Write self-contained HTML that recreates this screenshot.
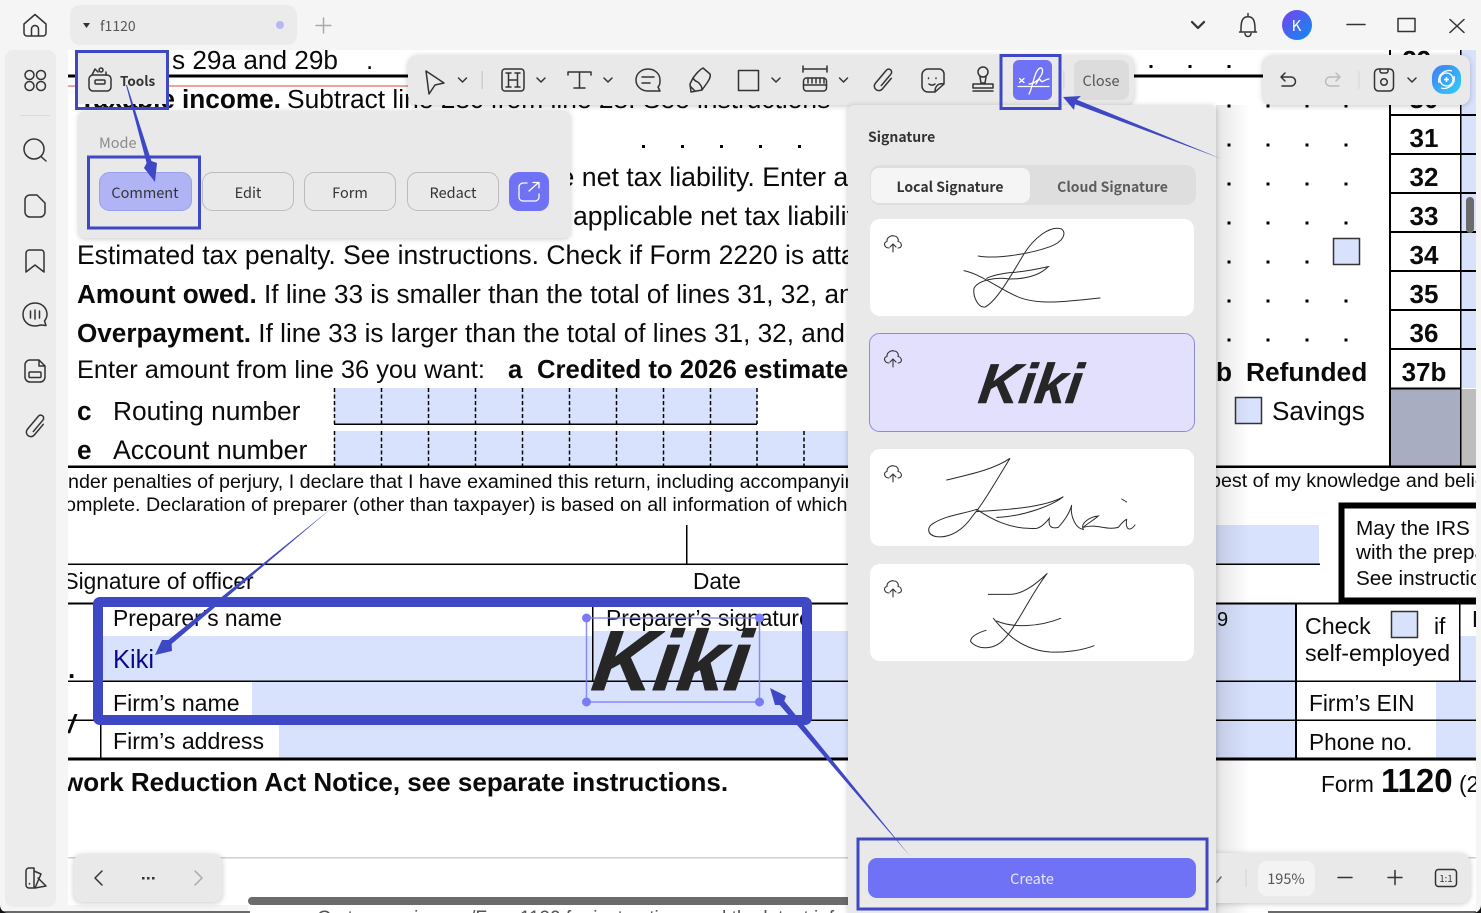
<!DOCTYPE html>
<html><head><meta charset="utf-8">
<style>
html,body{margin:0;padding:0;background:#f5f5f5;width:1481px;height:913px;overflow:hidden}
svg{display:block;position:absolute;left:0;top:0}
.d{font-family:"Liberation Sans",sans-serif;fill:#0a0a0a}
.b{font-weight:700}
.u{font-family:"Noto Sans CJK SC","Liberation Sans",sans-serif;fill:#333}
.i{fill:none;stroke:#333;stroke-width:1.5;stroke-linecap:round;stroke-linejoin:round}
.g{stroke:#aaa}
.k{font-family:"Liberation Sans",sans-serif;font-style:italic;font-weight:700;fill:#262626;stroke:#262626;stroke-linejoin:round}
.sig{fill:none;stroke:#2a2a2a;stroke-width:1;stroke-linecap:round}
.sh{filter:drop-shadow(0 1px 3px rgba(0,0,0,.22))}
.a{fill:#3f48c4}
</style></head><body>
<svg width="1481" height="913" viewBox="0 0 1481 913" xmlns="http://www.w3.org/2000/svg">
<defs>
<clipPath id="doc"><rect x="68" y="50" width="1408" height="863"/></clipPath>
<clipPath id="boxr"><rect x="1346" y="508" width="130" height="90"/></clipPath>
<linearGradient id="av" x1="0" y1="0" x2="1" y2="1"><stop offset="0" stop-color="#7a3ff0"/><stop offset="1" stop-color="#0a90ee"/></linearGradient>
<linearGradient id="ai" x1="0" y1="0" x2="1" y2="1"><stop offset="0" stop-color="#3d7df5"/><stop offset="1" stop-color="#35d0f5"/></linearGradient>
<linearGradient id="fade" x1="0" y1="0" x2="1" y2="0"><stop offset="0" stop-color="#000" stop-opacity=".1"/><stop offset="1" stop-color="#000" stop-opacity="0"/></linearGradient>
<g id="cloud" class="i" style="stroke-width:1.1"><path d="M-4 4C-9 4-10-2-6-2.500C-6.500-7-1-9 1-8C4-8 6-5 5-2.500C9-2 10 4 5 4"/><path d="M0 8V0M-3 3L0 0L3 3"/></g>
<path id="chev" class="i" d="M-4-2L0 2L4-2"/>
<path id="clip" d="M1.500 6V-9A3 3 0 0 0-4.500-9V8A4.500 4.500 0 0 0 4.500 8V-6"/>
</defs>

<!-- document -->
<g clip-path="url(#doc)">
<rect x="68" y="50" width="1408" height="863" fill="#fff"/>
<!-- blue fields -->
<g fill="#d9e2fd">
<rect x="1461" y="50" width="15" height="338"/>
<rect x="334" y="388" width="423" height="36"/>
<rect x="334" y="431" width="530" height="35"/>
<rect x="1180" y="525" width="139" height="39"/>
<rect x="103" y="636" width="489" height="45"/>
<rect x="592" y="631" width="300" height="50"/>
<rect x="103" y="682" width="780" height="38"/>
<rect x="100" y="721" width="780" height="37"/>
<rect x="1180" y="604" width="115" height="154"/>
<rect x="1460" y="636" width="16" height="45"/>
<rect x="1436" y="682" width="40" height="38"/>
<rect x="1436" y="721" width="40" height="37"/>
</g>
<rect x="103" y="682" width="149" height="38" fill="#fff"/>
<rect x="101" y="721" width="178" height="37" fill="#fff"/>
<rect x="1390" y="389" width="70" height="77" fill="#a8adc2"/>
<rect x="1461" y="389" width="15" height="77" fill="#bdbdbd"/>

<!-- rules -->
<g fill="#000">
<rect x="68" y="74.500" width="1396" height="3"/>
<rect x="68" y="465.500" width="1408" height="2.500"/>
<rect x="68" y="563.500" width="1252" height="1.500"/>
<rect x="68" y="602.500" width="1408" height="2"/>
<rect x="68" y="680.500" width="1408" height="1.500"/>
<rect x="68" y="719.500" width="1408" height="1.500"/>
<rect x="68" y="757.500" width="1408" height="3"/>
<rect x="686" y="525" width="1.500" height="39"/>
<rect x="592" y="604" width="1.500" height="77"/>
<rect x="100" y="604" width="1.500" height="154"/>
<rect x="1295" y="604" width="2" height="154"/>
<rect x="1459" y="604" width="1.500" height="77"/>
<rect x="1389" y="50" width="2" height="416"/>
<rect x="1460" y="50" width="1.500" height="416"/>
<rect x="334" y="423.500" width="423" height="1.500"/>
</g>
<rect x="68" y="85.500" width="345" height="1" fill="#e0453f"/>
<g fill="#000">
<rect x="1390" y="114" width="70" height="2"/><rect x="1390" y="153" width="70" height="2"/><rect x="1390" y="192" width="70" height="2"/><rect x="1390" y="231" width="70" height="2"/><rect x="1390" y="270" width="70" height="2"/><rect x="1390" y="309" width="70" height="2"/><rect x="1390" y="348" width="70" height="2"/><rect x="1390" y="387.500" width="70" height="2"/>
<rect x="1461" y="114" width="15" height="2"/><rect x="1461" y="153" width="15" height="2"/><rect x="1461" y="192" width="15" height="2"/><rect x="1461" y="231" width="15" height="2"/><rect x="1461" y="270" width="15" height="2"/><rect x="1461" y="309" width="15" height="2"/><rect x="1461" y="348" width="15" height="2"/>
</g>
<g stroke="#000" stroke-width="1.500" stroke-dasharray="4 2.500">
<path d="M334.500 388V424M381.500 388V424M428.500 388V424M475.500 388V424M522.500 388V424M569.500 388V424M616.500 388V424M663.500 388V424M710.500 388V424M757 388V424"/>
<path d="M334.500 431V466M381.500 431V466M428.500 431V466M475.500 431V466M522.500 431V466M569.500 431V466M616.500 431V466M663.500 431V466M710.500 431V466M757 431V466M804 431V466"/>
</g>

<!-- dots -->
<g fill="#000">
<rect x="1149.500" y="65" width="3" height="3"/><rect x="1188.500" y="65" width="3" height="3"/><rect x="1227.500" y="65" width="3" height="3"/>
<rect x="1227.500" y="104.500" width="3" height="3"/><rect x="1266.500" y="104.500" width="3" height="3"/><rect x="1305.500" y="104.500" width="3" height="3"/><rect x="1344.500" y="104.500" width="3" height="3"/>
<rect x="1227.500" y="143.500" width="3" height="3"/><rect x="1266.500" y="143.500" width="3" height="3"/><rect x="1305.500" y="143.500" width="3" height="3"/><rect x="1344.500" y="143.500" width="3" height="3"/>
<rect x="1227.500" y="182.500" width="3" height="3"/><rect x="1266.500" y="182.500" width="3" height="3"/><rect x="1305.500" y="182.500" width="3" height="3"/><rect x="1344.500" y="182.500" width="3" height="3"/>
<rect x="1227.500" y="221.500" width="3" height="3"/><rect x="1266.500" y="221.500" width="3" height="3"/><rect x="1305.500" y="221.500" width="3" height="3"/><rect x="1344.500" y="221.500" width="3" height="3"/>
<rect x="1227.500" y="260.500" width="3" height="3"/><rect x="1266.500" y="260.500" width="3" height="3"/><rect x="1305.500" y="260.500" width="3" height="3"/>
<rect x="1227.500" y="299.500" width="3" height="3"/><rect x="1266.500" y="299.500" width="3" height="3"/><rect x="1305.500" y="299.500" width="3" height="3"/><rect x="1344.500" y="299.500" width="3" height="3"/>
<rect x="1227.500" y="338.500" width="3" height="3"/><rect x="1266.500" y="338.500" width="3" height="3"/><rect x="1305.500" y="338.500" width="3" height="3"/><rect x="1344.500" y="338.500" width="3" height="3"/>
<rect x="642" y="145" width="3" height="3"/><rect x="681" y="145" width="3" height="3"/><rect x="720" y="145" width="3" height="3"/><rect x="759" y="145" width="3" height="3"/><rect x="798" y="145" width="3" height="3"/>
</g>

<!-- checkboxes -->
<g fill="#d9e2fd" stroke="#333" stroke-width="1.500">
<rect x="1333.500" y="238.500" width="26" height="26"/>
<rect x="1235.500" y="397.500" width="26" height="26"/>
<rect x="1391.500" y="611.500" width="26" height="26"/>
</g>

<!-- text -->
<g class="d" font-size="26.200">
<text x="172" y="69">s 29a and 29b</text>
<text x="366" y="69">.</text>
<text x="175" y="108" class="b" text-anchor="end">Taxable</text>
<text x="182" y="108" class="b">income.</text>
<text x="287" y="108" font-size="26.350">Subtract line 28c from line 28. See instructions</text>
<text x="559.500" y="186" font-size="26.700">e net tax liability. Enter a</text>
<text x="573" y="225" font-size="26.600">applicable net tax liability</text>
<text x="77" y="264" font-size="26.500">Estimated tax penalty. See instructions. Check if Form 2220 is attac</text>
<text x="77" y="303"><tspan class="b" font-size="26.100">Amount owed.</tspan> If line 33 is smaller than the total of lines 31, 32, an</text>
<text x="77" y="342"><tspan class="b" font-size="26.100">Overpayment.</tspan> If line 33 is larger than the total of lines 31, 32, and</text>
<text x="77" y="378" font-size="25.400">Enter amount from line 36 you want:</text>
<text x="508" y="378" class="b" font-size="25.700">a</text>
<text x="537" y="378" class="b" font-size="25.700">Credited to 2026 estimated</text>
<text x="77" y="420" class="b">c</text>
<text x="113" y="420" font-size="26.350">Routing number</text>
<text x="77" y="459" class="b">e</text>
<text x="113" y="459" font-size="26.700">Account number</text>
<text x="1216" y="381" class="b">b</text>
<text x="1246" y="381" class="b" font-size="26.300">Refunded</text>
<text x="1272" y="420" font-size="26.100">Savings</text>
</g>
<g class="d b" font-size="26" text-anchor="middle">
<text x="1424" y="69">29c</text><text x="1424" y="108">30</text>
<text x="1424" y="147">31</text><text x="1424" y="186">32</text><text x="1424" y="225">33</text><text x="1424" y="264">34</text><text x="1424" y="303">35</text><text x="1424" y="342">36</text><text x="1424" y="381">37b</text>
</g>
<g class="d" font-size="19.700">
<text x="68" y="488">nder penalties of perjury, I declare that I have examined this return, including accompanying</text>
<text x="65" y="511">omplete. Declaration of preparer (other than taxpayer) is based on all information of which</text>
<text x="1210" y="487">best of my knowledge and belief</text>
</g>
<g class="d" font-size="22.700">
<text x="63.500" y="589">Signature of officer</text>
<text x="693" y="589">Date</text>
<text x="113" y="626" font-size="22.800">Preparer’s name</text>
<text x="606" y="626" font-size="22.800">Preparer’s signature</text>
<text x="113" y="711" font-size="23.100">Firm’s name</text>
<text x="113" y="749" font-size="23.100">Firm’s address</text>
<text x="1217" y="626" font-size="20">9</text>
<text x="1305" y="634" font-size="23.200">Check</text>
<text x="1434" y="634">if</text>
<text x="1305" y="661" font-size="23.300">self-employed</text>
<text x="1309" y="711">Firm’s EIN</text>
<text x="1309" y="750">Phone no.</text>
<text x="1321" y="792">Form</text>
<text x="1459" y="792">(2</text>
<text x="1472" y="627">P</text>
</g>
<text class="d" x="113" y="668" font-size="25.500" style="fill:#0a0a8c">Kiki</text>
<text class="d b" x="63" y="791" font-size="26">work Reduction Act Notice, see separate instructions.</text>
<text class="d b" x="1381" y="792" font-size="33">1120</text>
<text class="d" x="68" y="678" font-size="26" font-weight="700">.</text>
<text class="d b" x="68" y="733" font-size="26" font-style="italic">/</text>

<!-- IRS box -->
<rect x="1341.500" y="505.500" width="160" height="95" fill="none" stroke="#000" stroke-width="6"/>
<g class="d" font-size="20.700" clip-path="url(#boxr)">
<text x="1356" y="535">May the IRS</text>
<text x="1356" y="559">with the preparer</text>
<text x="1356" y="585">See instructions</text>
</g>

<!-- page bottom -->
<rect x="68" y="857" width="1408" height="1.500" fill="#cfcfcf"/>
<text class="d" x="317" y="924" font-size="19" style="fill:#555">Go to www.irs.gov/Form1120 for instructions and the latest information.</text>
<rect x="1216" y="105" width="34" height="808" fill="url(#fade)"/>
<rect x="248" y="897" width="610" height="8" rx="4" fill="#6b6b6b"/>
<rect x="1466" y="197" width="8" height="36" rx="4" fill="#6b6b6b"/>
</g>

<!-- big Kiki + selection -->
<text class="k" font-size="85" stroke-width="1" transform="translate(590 690) skewX(-8)">Kiki</text>
<g fill="#7b7bf5" stroke="#7b7bf5">
<path d="M586.500 618H759.500M586.500 702H759.500M586.500 618V702M759.500 618V702" fill="none" stroke-width="1.500" opacity=".85"/>
<circle cx="586.500" cy="618" r="4"/><circle cx="759.500" cy="618" r="4"/><circle cx="586.500" cy="702" r="4"/><circle cx="759.500" cy="702" r="4"/>
</g>

<!-- title bar -->
<rect x="0" y="0" width="1481" height="50" fill="#f5f5f5"/>
<rect x="1476" y="50" width="5" height="863" fill="#f5f5f5"/>
<rect x="0" y="50" width="68" height="863" fill="#f5f5f5"/>
<rect x="0" y="905" width="248" height="8" fill="#f5f5f5"/>
<rect x="0" y="911" width="250" height="2" fill="#6a6a6a"/>
<rect x="1268" y="911" width="208" height="2" fill="#6a6a6a"/>
<path d="M0 905V913H8A8 8 0 0 1 0 905Z" fill="#111"/>
<path d="M1481 905V913H1473A8 8 0 0 0 1481 905Z" fill="#111"/>
<rect x="70" y="5" width="227" height="40" rx="10" fill="#ebebeb"/>
<path d="M83 23H90L86.500 28Z" fill="#333"/>
<text class="u" x="100" y="31" font-size="14" style="fill:#555">f1120</text>
<circle cx="280" cy="25" r="4" fill="#b9b6f5"/>
<path class="i g" d="M323.500 18V33M316 25.500H331"/>
<path class="i" d="M24 24L35 14.500L46 24V33A3 3 0 0 1 43 36H27A3 3 0 0 1 24 33ZM31.500 36V29A3.500 3.500 0 0 1 38.500 29V36"/>
<use href="#chev" transform="translate(1198 25) scale(1.500)"/>
<path class="i" d="M1248 13.500V16M1241 32C1241 29 1240.500 22 1243 19C1245 16 1251 16 1253 19C1255.500 22 1255 29 1255 32H1241ZM1239.500 32H1256.500M1245 33.500A3 3 0 0 0 1251 33.500"/>
<circle cx="1297" cy="25" r="15" fill="url(#av)"/>
<text x="1296.500" y="31" font-family="Noto Sans CJK SC,Liberation Sans,sans-serif" font-size="15" text-anchor="middle" fill="#fff">K</text>
<path class="i" d="M1347 24.500H1365M1398 18.500H1415V31.500H1398ZM1450 19.500L1464 32.500M1464 19.500L1450 32.500"/>

<!-- left sidebar -->
<rect x="5" y="50" width="51" height="857" rx="8" fill="#ececec"/>
<g class="i">
<circle cx="29.500" cy="75" r="4.500"/><circle cx="41" cy="75" r="4.500"/><circle cx="29.500" cy="86" r="4.500"/><circle cx="41" cy="86" r="4.500"/>
<circle cx="34" cy="149" r="10"/><path d="M41.500 157L46 161"/>
<path d="M30 195H37L45 203V212A5 5 0 0 1 40 217H30A5 5 0 0 1 25 212V200A5 5 0 0 1 30 195Z"/>
<path d="M29.500 250H41A3 3 0 0 1 44 253V272L35 265L26 272V253A3.500 3.500 0 0 1 29.500 250Z"/>
<path d="M35 303C28 303 23 308 23 314.500C23 321 28 326 35 326C37 326 39 325.500 40.500 325L46 325.500L44.500 321C46 319 47 317 47 314.500C47 308 42 303 35 303ZM30.500 311V318M35 310V319M39.500 311V318"/>
<path d="M30 360H39L45 366V377A5 5 0 0 1 40 382H30A5 5 0 0 1 25 377V365A5 5 0 0 1 30 360ZM39 360V366H45"/>
<rect x="29" y="372" width="12" height="5.500" rx="1"/>
<use href="#clip" transform="translate(36 426) rotate(40)"/>
<path d="M29 868H34V888H29A3 3 0 0 1 26 885V871A3 3 0 0 1 29 868ZM34 871L41 874L35 888M38 878L46 886L35 888"/>
<path d="M29.500 883.500V884"/>
</g>
<rect x="20" y="115" width="30" height="1" fill="#dadada"/>

<!-- tools button -->
<rect x="76" y="52" width="91" height="52" fill="#e9e9e9"/>
<g class="i"><rect x="89" y="75" width="22" height="16" rx="4"/><rect x="95" y="80" width="10" height="4" rx="1"/><path d="M92 75L95 69L98 72M101 68A2 2 0 1 0 101.100 68M106 75V72"/></g>
<text class="u" x="120" y="86" font-size="13.500" font-weight="700">Tools</text>

<!-- mode panel -->
<rect class="sh" x="79" y="111" width="491" height="127" rx="6" fill="#e9e9e9"/>
<text class="u" x="99" y="148" font-size="14.500" style="fill:#8a8a8a">Mode</text>
<rect x="99.500" y="172.500" width="92" height="38" rx="10" fill="#b0b4f5" stroke="#9a9eee"/>
<rect x="202.500" y="172.500" width="91" height="38" rx="10" fill="#e9e9e9" stroke="#bcbcbc"/>
<rect x="304.500" y="172.500" width="91" height="38" rx="10" fill="#e9e9e9" stroke="#bcbcbc"/>
<rect x="407.500" y="172.500" width="91" height="38" rx="10" fill="#e9e9e9" stroke="#bcbcbc"/>
<rect x="509" y="172" width="40" height="39" rx="10" fill="#6f72f5"/>
<path d="M527 183H523A4 4 0 0 0 519 187V197A4 4 0 0 0 523 201H535A4 4 0 0 0 539 197V194M529 191L538 183M533 182.500H539V188" fill="none" stroke="#fff" stroke-width="1.300" stroke-linecap="round" stroke-linejoin="round"/>
<g class="u" font-size="14.500" text-anchor="middle">
<text x="145" y="198">Comment</text><text x="248" y="198">Edit</text><text x="350" y="198">Form</text><text x="453" y="198">Redact</text>
</g>

<!-- main toolbar -->
<rect class="sh" x="408" y="55" width="726" height="50" rx="10" fill="#e9e9e9"/>
<g class="i">
<path d="M426 71L444 83L435 85L429 94Z"/>
<use href="#chev" transform="translate(462.500 80)"/>
<rect x="502" y="69" width="22" height="22" rx="3"/>
<path d="M506 73H511M506 87H511M515 73H520M515 87H520M508.500 73V87M517.500 73V87M508.500 80H517.500"/>
<use href="#chev" transform="translate(541 80)"/>
<path d="M568 75V72H591V75M579.500 72V88M574 88H585" />
<use href="#chev" transform="translate(608 80)"/>
<path d="M648 69C641 69 636 74 636 80C636 86 641 91 648 91H660L658 87C660 85 660 83 660 80C660 74 655 69 648 69ZM642 77H654M642 83H650"/>
<path d="M703 68L710 74C711 77 709 80 707 83L702 90L691 92L690 84L693 78C696 74 699 70 703 68ZM693 78C695 82 697 81 699 83C700 85 702 85 702 90M690 86L695 91"/>
<rect x="738.500" y="70.500" width="20" height="20"/>
<use href="#chev" transform="translate(776 80)"/>
<path d="M803 66V72M827 66V72M803 69H827"/>
<rect x="803.500" y="78" width="23" height="13" rx="3"/>
<path d="M803.500 85H826.500M808 79V83M812 79V83M816 79V83M820 79V83M824 79V83"/>
<use href="#chev" transform="translate(843.500 80)"/>
<use href="#clip" transform="translate(884 80) rotate(40)"/>
<path d="M928 69H939A5 5 0 0 1 944 74V84L935 92H928A6 6 0 0 1 922 86V75A6 6 0 0 1 928 69ZM944 84C938 83 935 86 935 92M928.500 78V78.500M936 78V78.500M929 84C931 85.500 933 85.500 935 84"/>
<circle cx="983" cy="72" r="5"/>
<path d="M980 77L981 83H985L986 77M973 84H993V88H973ZM973 91H993"/>
</g>
<rect x="481.500" y="71" width="1.500" height="18" fill="#cfcfcf"/>
<rect x="1013" y="60" width="39" height="40" rx="6" fill="#6f72f5"/>
<g fill="none" stroke="#fff" stroke-width="1.300" stroke-linecap="round">
<path d="M1018 86.500H1049M1019.500 78.500L1024 82.500M1024 78.500L1019.500 82.500"/>
<path d="M1029 94C1033 87 1034 71 1040 68C1046 67 1041 83 1029 84M1036 84C1038 80 1040 78 1041 81C1043 83 1045 79 1049 79"/>
</g>
<rect x="1063" y="71" width="1.500" height="18" fill="#d8d8d8"/>
<rect x="1074" y="60" width="55" height="40" rx="8" fill="#dcdcdc"/>
<text class="u" x="1101" y="86" font-size="14.500" text-anchor="middle" style="fill:#555">Close</text>

<!-- undo toolbar -->
<rect class="sh" x="1263" y="55" width="207" height="50" rx="10" fill="#e9e9e9"/>
<g class="i">
<path d="M1285 73L1281 77L1285 81M1281 77H1291A4.500 4.500 0 0 1 1291 86H1282"/>
<path class="g" style="stroke:#bbb" d="M1336 73L1340 77L1336 81M1340 77H1330A4.500 4.500 0 0 0 1330 86H1339"/>
<rect x="1374.500" y="69" width="19" height="22" rx="4"/>
<path d="M1380 69V71A2 2 0 0 0 1382 73H1386A2 2 0 0 0 1388 71V69"/>
<circle cx="1384" cy="82" r="3.300"/>
<use href="#chev" transform="translate(1412 80)"/>
</g>
<rect x="1358.500" y="71" width="1" height="18" fill="#d8d8d8"/>
<rect x="1432" y="65" width="29" height="29" rx="12" fill="url(#ai)"/>
<g fill="none" stroke="#fff" stroke-width="1.300">
<circle cx="1446.500" cy="79.500" r="6.500"/><path d="M1439 83C1437 73 1447 69 1452 71M1454 76C1456 86 1446 90 1441 88"/>
<path d="M1446.500 77V82M1444 79.500H1449" stroke-width="1.500"/>
</g>

<!-- bottom nav -->
<rect class="sh" x="74" y="854" width="148" height="48" rx="8" fill="#e9e9e9"/>
<path class="i" d="M102 871L95 878L102 885"/>
<path class="i" d="M195 871L202 878L195 885" style="stroke:#aaa"/>
<g fill="#333"><rect x="142" y="877" width="2.500" height="2.500"/><rect x="147" y="877" width="2.500" height="2.500"/><rect x="152" y="877" width="2.500" height="2.500"/></g>

<!-- zoom bar -->
<rect class="sh" x="1190" y="853" width="280" height="50" rx="10" fill="#e9e9e9"/>
<path class="i" d="M1217 882L1221 877" style="stroke:#666"/>
<rect x="1245.500" y="869" width="1" height="18" fill="#d4d4d4"/>
<rect x="1258" y="861" width="57" height="35" rx="9" fill="#f3f3f3"/>
<text class="u" x="1286" y="884" font-size="14.500" text-anchor="middle" style="fill:#555">195%</text>
<path class="i" d="M1338 877.500H1352M1388 877.500H1402M1395 870.500V884.500"/>
<rect class="i" x="1435.500" y="869.500" width="21" height="17" rx="3"/>
<text class="u" x="1446" y="882" font-size="9.500" text-anchor="middle">1:1</text>

<!-- signature panel -->
<path class="sh" d="M854 105H1210A6 6 0 0 1 1216 111V913H848V111A6 6 0 0 1 854 105Z" fill="#e9e9e9"/>
<text class="u" x="868" y="142" font-size="14" font-weight="700">Signature</text>
<rect x="870" y="165" width="326" height="40" rx="10" fill="#dedede"/>
<rect x="871" y="168" width="159" height="35" rx="8" fill="#f5f5f5"/>
<text class="u" x="950" y="192" font-size="14" font-weight="700" text-anchor="middle">Local Signature</text>
<text class="u" x="1112.500" y="192" font-size="14" font-weight="700" text-anchor="middle" style="fill:#5c5c5c">Cloud Signature</text>
<rect x="870" y="219" width="324" height="97" rx="10" fill="#fff"/>
<rect x="869.500" y="333.500" width="325" height="98" rx="10" fill="#e2e0fc" stroke="#8a8be0"/>
<rect x="870" y="449" width="324" height="97" rx="10" fill="#fff"/>
<rect x="870" y="564" width="324" height="97" rx="10" fill="#fff"/>
<use href="#cloud" transform="translate(893 244)"/>
<use href="#cloud" transform="translate(893 359)"/>
<use href="#cloud" transform="translate(893 474)"/>
<use href="#cloud" transform="translate(893 589)"/>
<g class="sig" transform="translate(850 105) scale(.33333)" style="stroke-width:3">
<path d="M385 453C430 462 530 450 600 425C640 410 650 385 635 372C600 360 550 400 520 450C490 500 440 590 405 606C385 610 368 575 372 550C385 525 440 515 480 522C530 522 570 510 595 485C570 490 530 500 480 503C440 508 420 515 410 520"/>
<path d="M342 497C400 510 450 555 510 578C570 600 650 590 750 579"/>
</g>
<text class="k" font-size="56" stroke-width=".6" transform="translate(977 403) skewX(-8)">Kiki</text>
<g class="sig" transform="translate(850 440) scale(.33333)" style="stroke-width:3">
<path d="M290 120C350 105 430 90 480 55C440 120 400 190 370 225C340 270 300 295 260 290C230 285 230 262 250 250C290 225 340 222 380 208C420 235 480 270 560 265C575 262 590 245 598 235C595 255 600 268 625 262C645 240 660 215 665 195C660 225 675 265 700 268C690 250 720 230 745 228C725 245 705 255 700 262C740 250 770 272 805 262C815 250 822 240 830 238C825 270 840 275 855 255"/>
<path d="M380 215C450 210 580 205 640 170C610 195 520 230 440 232"/>
<path d="M815 177L830 186"/>
</g>
<g class="sig" transform="translate(850 440) scale(.33333)" style="stroke-width:3">
<path d="M415 463H480C520 463 560 430 592 400C550 450 500 560 460 600C430 630 385 630 362 605C360 590 385 578 408 571"/>
<path d="M430 535C470 585 520 630 600 636C650 638 700 630 732 617"/>
<path d="M440 543C490 565 570 560 632 535"/>
</g>

<!-- Create -->
<rect x="868" y="858" width="328" height="40" rx="9" fill="#6f72f5"/>
<text class="u" x="1032" y="884" font-size="14.500" text-anchor="middle" style="fill:#e6e6ff">Create</text>

<!-- annotation rects -->
<g fill="none" stroke="#3f48c4">
<rect x="76.500" y="51.500" width="91" height="57" stroke-width="3"/>
<rect x="88.500" y="157" width="111" height="71" stroke-width="3"/>
<rect x="1001" y="55.500" width="59" height="53" stroke-width="3"/>
<rect x="858" y="839" width="349" height="70" stroke-width="3"/>
<rect x="98" y="602" width="709" height="118" rx="2" stroke-width="10"/>
</g>
<!-- arrows -->
<polygon class="a" points="126,85 127,85 151.400,161 157,163 155,182 144,168 146.600,163"/>
<polygon class="a" points="1222,159 1077,99.700 1081,96 1063,97 1074,110 1075,104.300"/>
<polygon class="a" points="333,507 171.600,644 172,651 155,655 162,640 168.400,640"/>
<polygon class="a" points="910,856 784.300,701 786,696 770,688 775,705 779.700,705"/>
</svg>
</body></html>
